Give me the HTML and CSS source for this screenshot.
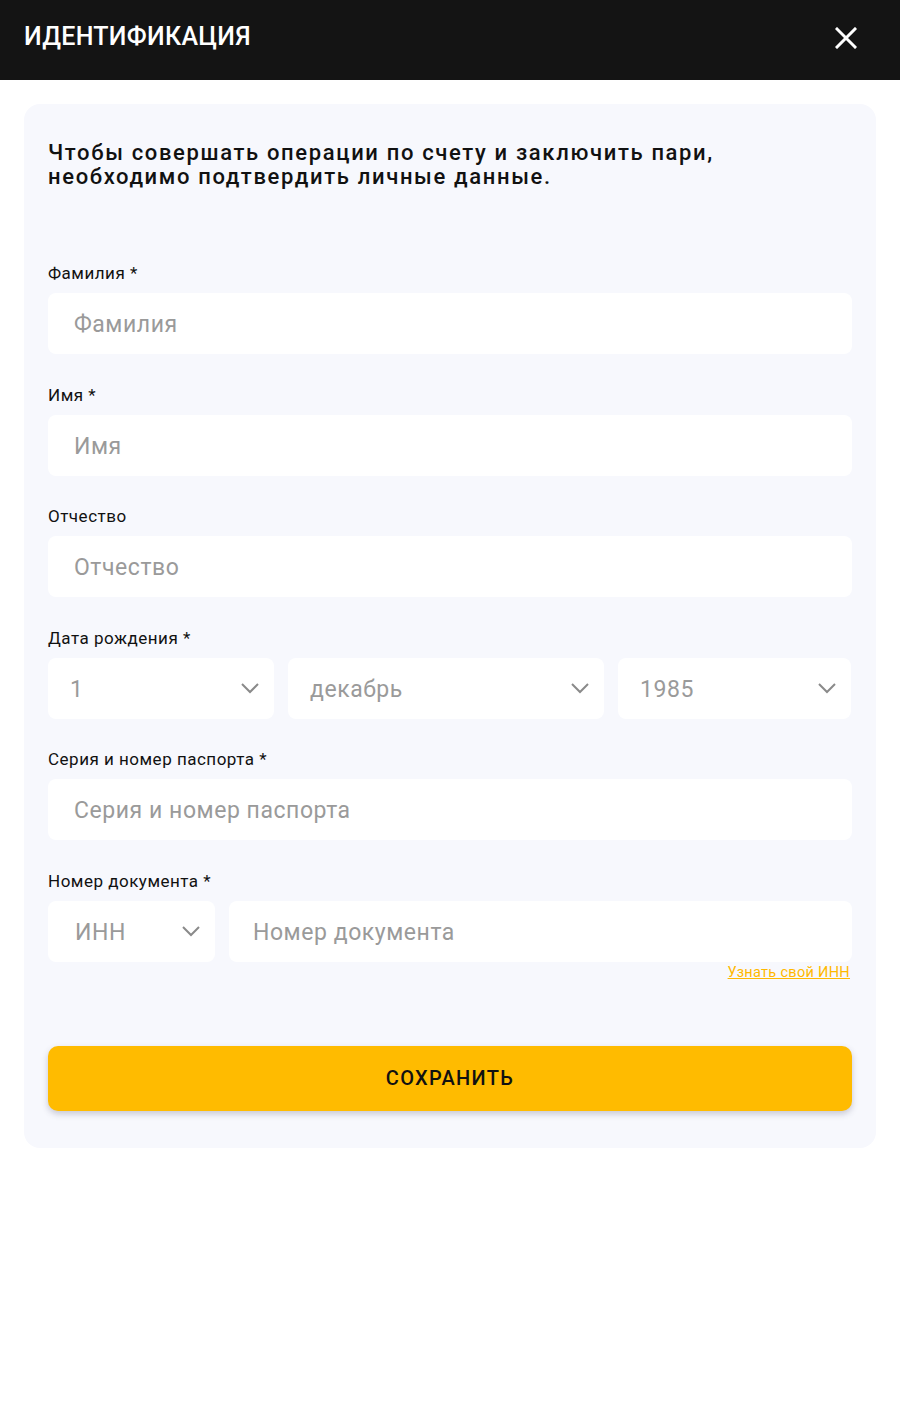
FILE: index.html
```html
<!DOCTYPE html>
<html lang="ru">
<head>
<meta charset="utf-8">
<title>Идентификация</title>
<link rel="stylesheet" href="styles.css">
</head>
<body>
<header class="topbar">
  <h1 class="title">ИДЕНТИФИКАЦИЯ</h1>
  <button class="close" aria-label="Закрыть">
    <svg width="22" height="22" viewBox="0 0 22 22"><path d="M2 2L20 20M20 2L2 20" stroke="#fff" stroke-width="3" stroke-linecap="square" fill="none"/></svg>
  </button>
</header>
<main class="card">
  <p class="intro">Чтобы совершать операции по счету и заключить пари, необходимо подтвердить личные данные.</p>
  <form class="form">
    <div class="field">
      <label class="label">Фамилия *</label>
      <div class="input"><span class="ph">Фамилия</span></div>
    </div>
    <div class="field">
      <label class="label">Имя *</label>
      <div class="input"><span class="ph">Имя</span></div>
    </div>
    <div class="field">
      <label class="label">Отчество</label>
      <div class="input"><span class="ph">Отчество</span></div>
    </div>
    <div class="field">
      <label class="label">Дата рождения *</label>
      <div class="row date-row">
        <div class="input select sel-day"><span class="ph">1</span><svg class="chev" width="20" height="12" viewBox="0 0 20 12"><path d="M2 2L10 10L18 2" stroke="#8a8a8a" stroke-width="2" fill="none"/></svg></div>
        <div class="input select sel-month"><span class="ph">декабрь</span><svg class="chev" width="20" height="12" viewBox="0 0 20 12"><path d="M2 2L10 10L18 2" stroke="#8a8a8a" stroke-width="2" fill="none"/></svg></div>
        <div class="input select sel-year"><span class="ph">1985</span><svg class="chev" width="20" height="12" viewBox="0 0 20 12"><path d="M2 2L10 10L18 2" stroke="#8a8a8a" stroke-width="2" fill="none"/></svg></div>
      </div>
    </div>
    <div class="field">
      <label class="label">Серия и номер паспорта *</label>
      <div class="input"><span class="ph">Серия и номер паспорта</span></div>
    </div>
    <div class="field field-doc">
      <label class="label">Номер документа *</label>
      <div class="row doc-row">
        <div class="input select sel-doc"><span class="ph">ИНН</span><svg class="chev" width="20" height="12" viewBox="0 0 20 12"><path d="M2 2L10 10L18 2" stroke="#8a8a8a" stroke-width="2" fill="none"/></svg></div>
        <div class="input doc-input"><span class="ph">Номер документа</span></div>
      </div>
      <a class="inn-link" href="#">Узнать свой ИНН</a>
    </div>
    <button type="button" class="save">СОХРАНИТЬ</button>
  </form>
</main>
</body>
</html>
```

FILE: styles.css
```css
* { box-sizing: border-box; }
html, body { margin: 0; padding: 0; }
body {
  background: #ffffff;
  font-family: Roboto, "Noto Sans", "Liberation Sans", sans-serif;
  color: #111;
  width: 900px;
}
.topbar {
  height: 80px;
  background: #141414;
  display: flex;
  align-items: center;
  justify-content: space-between;
  padding: 0 24px;
}
.title {
  margin: 0;
  color: #fff;
  font-size: 25px;
  font-weight: 500;
  letter-spacing: 0.3px;
  position: relative;
  top: -4px;
}
.close {
  background: none;
  border: 0;
  padding: 0;
  margin-right: 19px;
  width: 22px;
  height: 22px;
  display: flex;
  position: relative;
  top: -2px;
}
.card {
  margin: 24px 24px 0;
  background: #f7f8fd;
  border-radius: 16px;
  padding: 37px 24px 37px;
}
.intro {
  margin: 0;
  font-size: 22px;
  font-weight: 500;
  line-height: 24px;
  letter-spacing: 1.65px;
  color: #111;
  max-width: 720px;
}
.form {
  display: flex;
  flex-direction: column;
  margin-top: 84px;
}
.field {
  display: flex;
  flex-direction: column;
  margin-bottom: 40.5px;
}
.label {
  font-size: 17px;
  font-weight: 400;
  line-height: 20px;
  height: 20px;
  color: #111;
  position: relative;
  top: -10px;
  letter-spacing: 0.5px;
}
.input {
  height: 61px;
  background: #fff;
  border-radius: 8px;
  display: flex;
  align-items: center;
  padding: 0 26px;
}
.ph {
  font-size: 23px;
  color: #9a9a9a;
  letter-spacing: 0.55px;
  position: relative;
  top: 1px;
}
.row {
  display: flex;
  gap: 14px;
}
.select {
  justify-content: space-between;
  padding: 0 14px 0 22px;
}
.chev { flex: none; }
.sel-day { width: 226px; }
.sel-month { width: 316px; }
.sel-year { width: 233px; padding-right: 14px; }
.sel-doc { width: 167px; padding: 0 14px 0 27px; }
.doc-input { flex: 1; padding-left: 24px; }
.field-doc { margin-bottom: 0; }
.inn-link {
  align-self: flex-end;
  margin-top: 2px;
  margin-right: 2px;
  font-size: 14.5px;
  line-height: 18px;
  letter-spacing: 0.3px;
  color: #ffb800;
  text-decoration: underline;
}
.save {
  margin-top: 64px;
  height: 65px;
  border: 0;
  border-radius: 10px;
  background: #ffbb00;
  box-shadow: 0 3px 6px rgba(60, 60, 90, 0.25);
  font-family: Roboto, "Noto Sans", sans-serif;
  font-size: 20px;
  font-weight: 500;
  letter-spacing: 1.3px;
  color: #111;
}
```
